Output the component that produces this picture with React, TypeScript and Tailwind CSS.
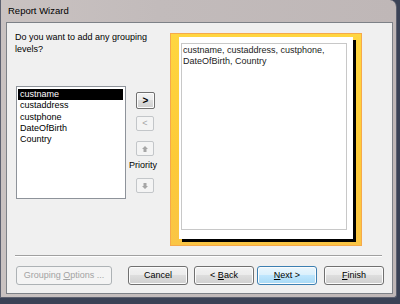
import React from "react";

const font = { fontFamily: '"Liberation Sans", Arial, sans-serif' };

function Btn({ label, kind = "normal", w = "w-[60px]" }: { label: React.ReactNode; kind?: "normal" | "default" | "disabled"; w?: string }) {
  const base = "h-[19px] rounded-[3px] border flex items-center justify-center text-[9px] shadow-[inset_0_0_0_1px_#fcfcfc]";
  const styles = {
    normal: "border-[#707070] text-black bg-[linear-gradient(#f2f2f2_0%,#ebebeb_50%,#dddddd_50%,#cfcfcf_100%)]",
    default: "border-[#3c7fb1] text-black bg-[linear-gradient(#eaf6fd_0%,#d9f0fc_50%,#bee6fd_50%,#a7d9f5_100%)]",
    disabled: "border-[#adb2b5] text-[#a3a3a3] bg-[#f4f4f4] shadow-none",
  };
  return <div className={`${base} ${styles[kind]} ${w}`}>{label}</div>;
}

function ArrowIcon({ down }: { down?: boolean }) {
  return (
    <svg width="8" height="8" viewBox="0 0 8 8" className={down ? "rotate-180" : ""}>
      <path d="M4 1 L7 4 H5.5 V7 H2.5 V4 H1 Z" fill="#a6a6a6" />
    </svg>
  );
}

export default function App() {
  const fields = ["custname", "custaddress", "custphone", "DateOfBirth", "Country"];
  return (
    <div className="w-[400px] h-[304px] overflow-hidden bg-[#3a4256]" style={font}>
      <div className="w-[397px] h-[298px] rounded-tr-[7px] rounded-br-[3px] border-l border-r border-b border-[#5d6170] bg-[linear-gradient(90deg,#c9c2c1,#c2bbbb_40%,#bfb7b7)] flex flex-col pl-[5px] pr-[3px] pb-[3px]">
        <div className="h-[22px] flex items-center pl-[2px] text-[9.5px] text-black">Report Wizard</div>
        <div className="flex-1 border border-[#7d8187] bg-[#f0f0f0] flex flex-col">
          <div className="flex pl-[8px] pt-[8px]">
            <div className="w-[155px] flex flex-col">
              <div className="text-[9px] leading-[12px] text-black">
                Do you want to add any grouping
                <br />
                levels?
              </div>
              <div className="flex items-start mt-[31px]">
                <div className="ml-[1px] w-[110px] h-[113px] border border-[#8e939a] bg-white p-[2px] pl-[1px]">
                  {fields.map((f, i) => (
                    <div
                      key={f}
                      className={`h-[11.25px] leading-[11.25px] text-[9px] pl-[2px] ${i === 0 ? "bg-black text-white" : "text-black"}`}
                    >
                      {f}
                    </div>
                  ))}
                </div>
                <div className="ml-[3px] mt-[6px] w-[30px] flex flex-col items-start">
                  <div className="ml-[7px] w-[19px] h-[17px] rounded-[2px] border border-[#707070] bg-[linear-gradient(#f2f2f2_0%,#ebebeb_50%,#dddddd_50%,#cfcfcf_100%)] shadow-[inset_0_0_0_1px_#fcfcfc] flex items-center justify-center text-[10px] font-bold text-black">
                    &gt;
                  </div>
                  <div className="ml-[7px] mt-[7px] w-[18px] h-[15px] rounded-[2px] border border-[#c3c6c9] bg-[#f4f4f4] flex items-center justify-center text-[9px] text-[#a6a6a6]">
                    &lt;
                  </div>
                  <div className="ml-[7px] mt-[10px] w-[18px] h-[15px] rounded-[2px] border border-[#c3c6c9] bg-[#f4f4f4] flex items-center justify-center">
                    <ArrowIcon />
                  </div>
                  <div className="mt-[3px] text-[9px] leading-[12px] text-black">Priority</div>
                  <div className="ml-[7px] mt-[7px] w-[18px] h-[15px] rounded-[2px] border border-[#c3c6c9] bg-[#f4f4f4] flex items-center justify-center">
                    <ArrowIcon down />
                  </div>
                </div>
              </div>
            </div>
            <div className="mt-[2px] w-[192px] h-[213px] border border-[#f6a94a] bg-[linear-gradient(#ffd640,#fdca38_60%,#fac545)] pl-[8px] pt-[3px]">
              <div className="w-[174px] h-[202px] bg-white shadow-[3px_3px_0_#000] pl-[2px] pt-[6px]">
                <div className="w-[166px] h-[187px] border border-[#c8c8c8] px-[1px] pt-[1px] text-[9px] leading-[11px] text-[#222]">
                  custname, custaddress, custphone,
                  <br />
                  DateOfBirth, Country
                </div>
              </div>
            </div>
          </div>
          <div className="ml-[8px] mt-[9px] w-[367px] border-t border-[#a0a0a0] border-b border-b-white" />
          <div className="flex items-center ml-[9px] mt-[9px]">
            <Btn kind="disabled" w="w-[96px]" label={<span>Grouping <u>O</u>ptions ...</span>} />
            <div className="ml-[16px]"><Btn label="Cancel" /></div>
            <div className="ml-[6px]"><Btn label={<span>&lt; <u>B</u>ack</span>} /></div>
            <div className="ml-[3px]"><Btn kind="default" label={<span><u>N</u>ext &gt;</span>} /></div>
            <div className="ml-[7px]"><Btn label={<span><u>F</u>inish</span>} /></div>
          </div>
        </div>
      </div>
    </div>
  );
}
